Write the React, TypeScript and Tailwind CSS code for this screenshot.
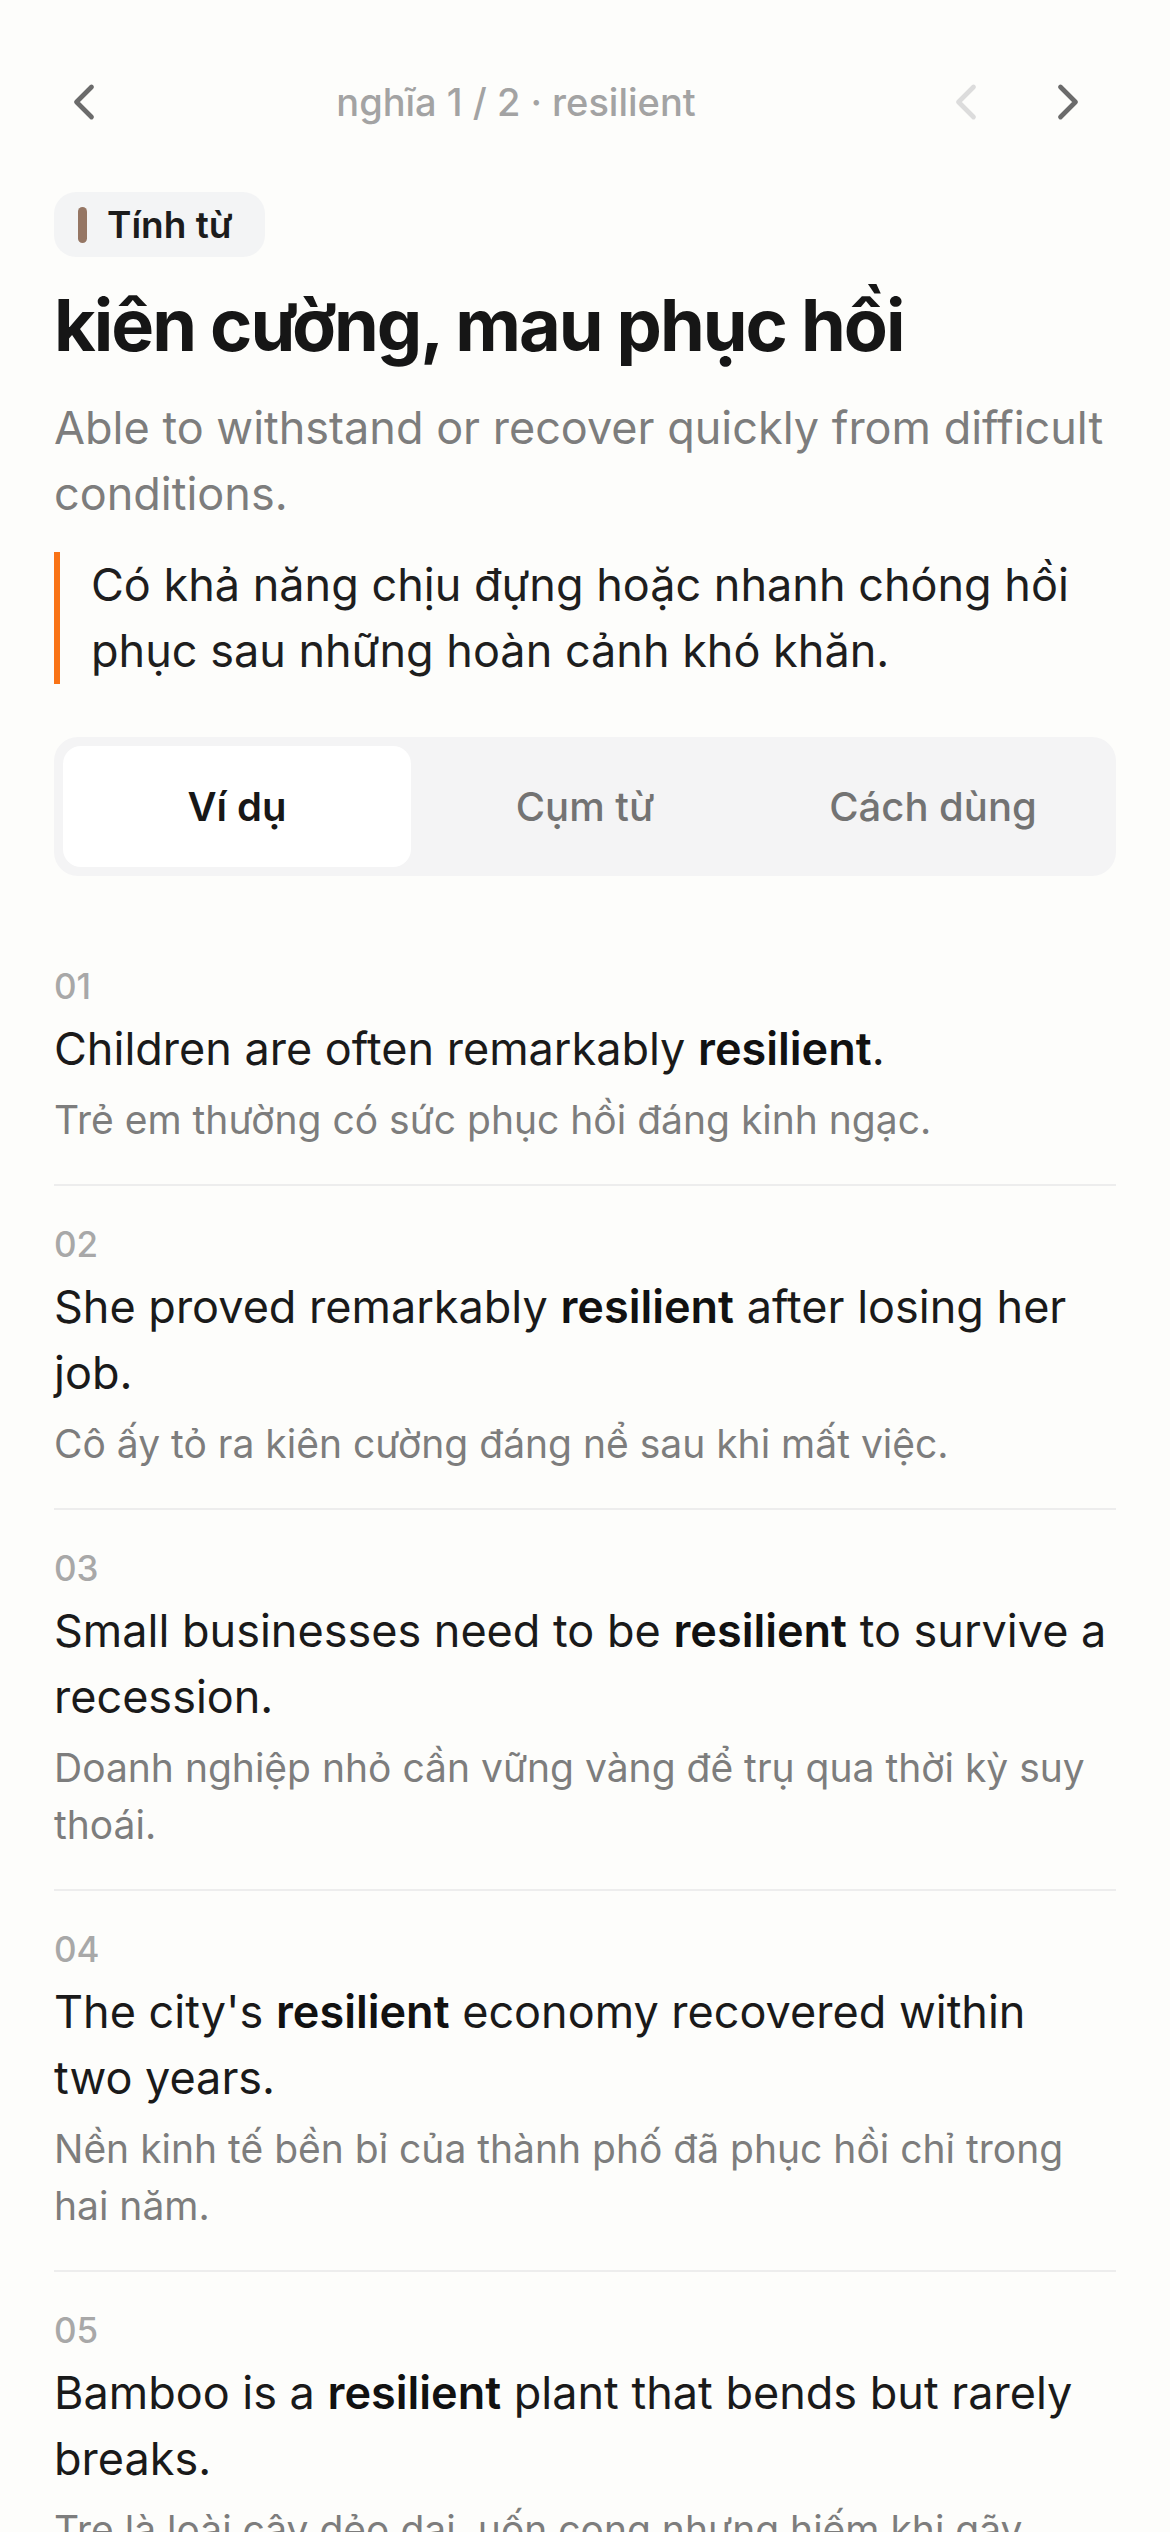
import React from "react";

function Chevron({ dir, color }: { dir: "left" | "right"; color: string }) {
  return (
    <svg width="60" height="60" viewBox="0 0 24 24" fill="none" stroke={color} strokeWidth="1.9" strokeLinecap="round" strokeLinejoin="round">
      {dir === "left" ? <path d="m15 18-6-6 6-6" /> : <path d="m9 18 6-6-6-6" />}
    </svg>
  );
}

const examples: { pre: string; post: string; vi: string }[] = [
  { pre: "Children are often remarkably ", post: ".", vi: "Trẻ em thường có sức phục hồi đáng kinh ngạc." },
  { pre: "She proved remarkably ", post: " after losing her job.", vi: "Cô ấy tỏ ra kiên cường đáng nể sau khi mất việc." },
  { pre: "Small businesses need to be ", post: " to survive a recession.", vi: "Doanh nghiệp nhỏ cần vững vàng để trụ qua thời kỳ suy thoái." },
  { pre: "The city's ", post: " economy recovered within two years.", vi: "Nền kinh tế bền bỉ của thành phố đã phục hồi chỉ trong hai năm." },
  { pre: "Bamboo is a ", post: " plant that bends but rarely breaks.", vi: "Tre là loài cây dẻo dai, uốn cong nhưng hiếm khi gãy." },
];

export default function App() {
  return (
    <div
      className="min-h-[2532px] w-[1170px] bg-[#fdfdfb] px-[54px] pt-[54px] pb-[80px]"
      style={{ fontFamily: "Inter, 'Noto Sans', sans-serif" }}
    >
      {/* Header */}
      <div className="flex h-[96px] items-center">
        <button className="flex h-[60px] w-[60px] items-center justify-center">
          <Chevron dir="left" color="#6b6b6b" />
        </button>
        <div className="flex-1 text-center text-[38px] font-medium text-[#a3a3a3]">nghĩa 1 / 2 · resilient</div>
        <div className="flex gap-[6px]">
          <button className="flex h-[96px] w-[96px] items-center justify-center">
            <Chevron dir="left" color="#dcdcdc" />
          </button>
          <button className="flex h-[96px] w-[96px] items-center justify-center">
            <Chevron dir="right" color="#6b6b6b" />
          </button>
        </div>
      </div>

      {/* Badge */}
      <div className="mt-[42px] inline-flex h-[65px] items-center gap-[20px] rounded-[22px] bg-[#f3f4f5] pl-[24px] pr-[32px]">
        <span className="h-[36px] w-[9px] rounded-full bg-[#957664]" />
        <span className="text-[37px] font-semibold text-[#1c1c1c]">Tính từ</span>
      </div>

      {/* Heading */}
      <h1 className="mt-[25px] text-[72px] font-bold leading-[86px] tracking-[-2px] text-[#161616]">kiên cường, mau phục hồi</h1>

      {/* English definition */}
      <p className="mt-[27px] text-[45px] leading-[66px] text-[#7d7d7d]">
        Able to withstand or recover quickly from difficult conditions.
      </p>

      {/* Vietnamese definition */}
      <div className="mt-[25px] border-l-[6px] border-[#f97316] pl-[31px]">
        <p className="text-[45px] leading-[66px] text-[#1e1e1e]">
          Có khả năng chịu đựng hoặc nhanh chóng hồi phục sau những hoàn cảnh khó khăn.
        </p>
      </div>

      {/* Tabs */}
      <div className="mt-[53px] grid h-[139px] grid-cols-3 rounded-[24px] bg-[#f4f4f5] p-[9px]">
        <div className="flex items-center justify-center rounded-[18px] bg-white text-[40px] font-semibold text-[#171717]">Ví dụ</div>
        <div className="flex items-center justify-center text-[40px] font-medium text-[#737373]">Cụm từ</div>
        <div className="flex items-center justify-center text-[40px] font-medium text-[#737373]">Cách dùng</div>
      </div>

      {/* Examples */}
      <div className="mt-[52px]">
        {examples.map((ex, i) => (
          <div key={i} className={`pt-[34px] pb-[36px] ${i < examples.length - 1 ? "border-b-2 border-[#ededed]" : ""}`}>
            <div className="text-[35px] font-medium leading-[48px] text-[#a8a8a8]">0{i + 1}</div>
            <p className="mt-[6px] text-[45px] leading-[66px] text-[#1a1a1a]">
              {ex.pre}
              <span className="font-semibold text-[#111111]">resilient</span>
              {ex.post}
            </p>
            <p className="mt-[9px] text-[39px] leading-[57px] text-[#7d7d7d]">{ex.vi}</p>
          </div>
        ))}
      </div>
    </div>
  );
}
